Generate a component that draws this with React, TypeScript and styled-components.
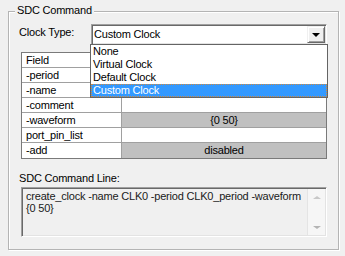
import React from "react";
import styled, { createGlobalStyle } from "styled-components";

const GlobalStyle = createGlobalStyle`
  html, body {
    margin: 0;
    padding: 0;
    background: #f0f0f0;
  }
  body {
    font-family: "Liberation Sans", Arial, sans-serif;
    font-size: 11px;
    letter-spacing: -0.2px;
    color: #000;
  }
`;

const Window = styled.div`
  width: 345px;
  height: 256px;
  box-sizing: border-box;
  padding: 11px 6px 6px 8px;
  background: #f0f0f0;
`;

const GroupBox = styled.div`
  position: relative;
  height: 100%;
  box-sizing: border-box;
  border: 1px solid #b4b4b4;
  box-shadow: inset 1px 1px 0 #fff, 1px 1px 0 #fff;
  padding: 12px 11px 0 12px;
  display: flex;
  flex-direction: column;
`;

const Legend = styled.span`
  position: absolute;
  top: -8px;
  left: 6px;
  padding: 0 2px;
  line-height: 13px;
  background: #f0f0f0;
`;

const FieldRow = styled.div`
  display: flex;
  align-items: flex-start;
`;

const Label = styled.span`
  width: 72px;
  margin-left: -2px;
  padding-top: 2px;
  line-height: 13px;
`;

const Combo = styled.div`
  position: relative;
  flex: 1;
  height: 21px;
  box-sizing: border-box;
  display: flex;
  align-items: stretch;
  background: #fff;
  border: 1px solid;
  border-color: #a0a0a0 #fff #fff #a0a0a0;
  box-shadow: inset 1px 1px 0 #696969, inset -1px -1px 0 #e3e3e3;
`;

const ComboText = styled.span`
  flex: 1;
  padding: 0 0 0 2px;
  line-height: 19px;
`;

const ComboButton = styled.span`
  width: 18px;
  margin: 1px 1px 1px 0;
  box-sizing: border-box;
  display: flex;
  align-items: center;
  justify-content: center;
  background: #f0f0f0;
  border: 1px solid;
  border-color: #f0f0f0 #696969 #696969 #f0f0f0;
  box-shadow: inset 1px 1px 0 #fff, inset -1px -1px 0 #a0a0a0;

  &::after {
    content: "";
    width: 0;
    height: 0;
    border-left: 4px solid transparent;
    border-right: 4px solid transparent;
    border-top: 4px solid #000;
    margin-top: 1px;
  }
`;

const DropList = styled.ul`
  position: absolute;
  top: 100%;
  left: -2px;
  right: -2px;
  margin: 0;
  padding: 0;
  list-style: none;
  background: #fff;
  border: 1px solid #646464;
  z-index: 2;
`;

const DropItem = styled.li<{ $selected?: boolean }>`
  height: 13px;
  line-height: 13px;
  padding-left: 2px;
  box-sizing: border-box;
  background: ${({ $selected }) => ($selected ? "#3399ff" : "#fff")};
  color: ${({ $selected }) => ($selected ? "#fff" : "#000")};
  outline: ${({ $selected }) => ($selected ? "1px dotted #d08a40" : "none")};
  outline-offset: -1px;
`;

const Table = styled.div`
  margin-top: 7px;
  border: 1px solid #7a7a7a;
  background: #fff;
  display: grid;
  grid-template-columns: 100px 1fr;
`;

const Cell = styled.div<{ $first?: boolean; $gray?: boolean; $last?: boolean }>`
  height: 15px;
  box-sizing: border-box;
  line-height: 14px;
  padding-left: ${({ $first }) => ($first ? "4px" : "0")};
  text-align: ${({ $first }) => ($first ? "left" : "center")};
  border-right: ${({ $first }) => ($first ? "1px solid #a0a0a0" : "none")};
  border-bottom: ${({ $last }) => ($last ? "none" : "1px solid #a0a0a0")};
  background: ${({ $gray }) => ($gray ? "#c0c0c0" : "#fff")};
  white-space: nowrap;
  overflow: hidden;
`;

const SectionLabel = styled.div`
  margin: 13px 0 0 -2px;
  line-height: 13px;
`;

const CommandBox = styled.div`
  margin-top: 2px;
  height: 50px;
  box-sizing: border-box;
  display: flex;
  background: #f0f0f0;
  border: 1px solid;
  border-color: #a0a0a0 #fff #fff #a0a0a0;
  box-shadow: inset 1px 1px 0 #696969, inset -1px -1px 0 #e3e3e3;
`;

const CommandText = styled.div`
  flex: 1;
  padding: 2px 3px 0 4px;
  line-height: 12px;
  white-space: pre-line;
  color: #1a1a1a;
`;

const ScrollBar = styled.div`
  width: 17px;
  margin: 1px 1px 1px 0;
  display: flex;
  flex-direction: column;
  justify-content: space-between;
  background: #f6f6f6;
  border-left: 1px solid #e4e4e4;
`;

const ScrollArrow = styled.span<{ $down?: boolean }>`
  height: 16px;
  display: flex;
  align-items: center;
  justify-content: center;

  &::after {
    content: "";
    width: 0;
    height: 0;
    border-left: 4px solid transparent;
    border-right: 4px solid transparent;
    ${({ $down }) =>
      $down ? "border-top: 3px solid #b4b4b4;" : "border-bottom: 3px solid #c8c8c8;"}
  }
`;

const rows = [
  { field: "Field", value: "Value", gray: false },
  { field: "-period", value: "CLK0_period", gray: false },
  { field: "-name", value: "CLK0", gray: false },
  { field: "-comment", value: "", gray: false },
  { field: "-waveform", value: "{0 50}", gray: true },
  { field: "port_pin_list", value: "", gray: false },
  { field: "-add", value: "disabled", gray: true },
];

const clockTypes = ["None", "Virtual Clock", "Default Clock", "Custom Clock"];

export default function App() {
  const selected = "Custom Clock";

  return (
    <>
      <GlobalStyle />
      <Window>
        <GroupBox>
          <Legend>SDC Command</Legend>
          <FieldRow>
            <Label>Clock Type:</Label>
            <Combo>
              <ComboText>{selected}</ComboText>
              <ComboButton />
              <DropList>
                {clockTypes.map((t) => (
                  <DropItem key={t} $selected={t === selected}>
                    {t}
                  </DropItem>
                ))}
              </DropList>
            </Combo>
          </FieldRow>

          <Table>
            {rows.map((r, i) => (
              <React.Fragment key={r.field}>
                <Cell $first $last={i === rows.length - 1}>
                  {r.field}
                </Cell>
                <Cell $gray={r.gray} $last={i === rows.length - 1}>
                  {r.value}
                </Cell>
              </React.Fragment>
            ))}
          </Table>

          <SectionLabel>SDC Command Line:</SectionLabel>
          <CommandBox>
            <CommandText>
              {"create_clock -name CLK0 -period CLK0_period -waveform\n{0 50}"}
            </CommandText>
            <ScrollBar>
              <ScrollArrow />
              <ScrollArrow $down />
            </ScrollBar>
          </CommandBox>
        </GroupBox>
      </Window>
    </>
  );
}
